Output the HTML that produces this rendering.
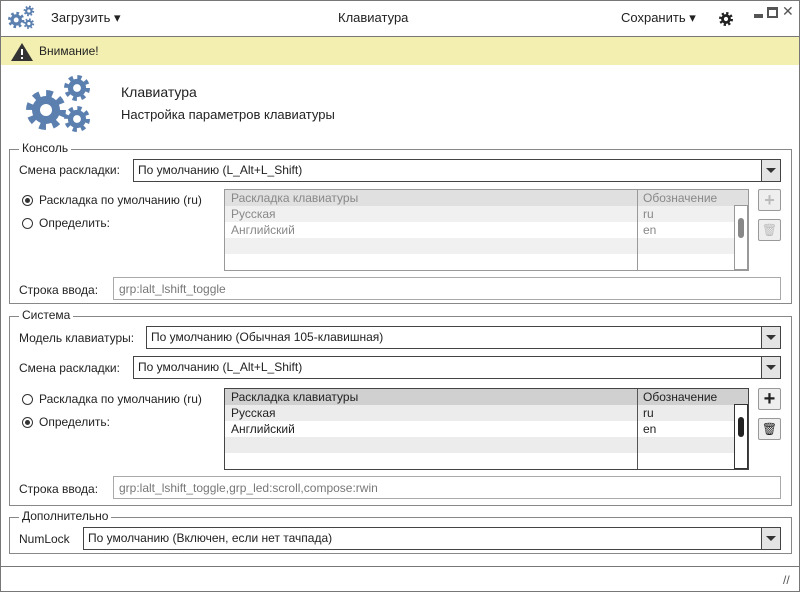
<!DOCTYPE html>
<html><head><meta charset="utf-8"><style>
*{box-sizing:border-box;margin:0;padding:0}
body{width:800px;height:592px;position:relative;background:#fff;font-family:"Liberation Sans",sans-serif;font-size:12px;color:#222;overflow:hidden}
.a{position:absolute}
.win{left:0;top:0;width:800px;height:592px;border:1px solid #777}
.combo{position:absolute;height:23px;border:1px solid #444;background:#fff;padding:3px 4px;white-space:nowrap}
.combo .btn{position:absolute;right:0;top:0;width:19px;height:21px;border-left:1px solid #444;background:#e4e4e4}
.combo .btn:after{content:"";position:absolute;left:4px;top:8px;border-left:5px solid transparent;border-right:5px solid transparent;border-top:5px solid #333}
.inp{position:absolute;height:23px;border:1px solid #aaa;padding:4px 5px;color:#777;white-space:nowrap}
fieldset{position:absolute;border:1px solid #888;border-radius:0}
.leg{position:absolute;background:#fff;padding:0 3px}
.radio{position:absolute;width:11px;height:11px;border:1px solid #333;border-radius:50%}
.radio.on:after{content:"";position:absolute;left:2px;top:2px;width:5px;height:5px;border-radius:50%;background:#333}
.tbl{position:absolute;border:1px solid #999;overflow:hidden}
.row{height:16px;padding-left:6px;line-height:16px;position:relative}
.row span{position:absolute;left:418px}
.sb{position:absolute;right:0;top:15px;width:14px;bottom:0;border:1px solid #333;background:#fff}
.sbtn{position:absolute;width:23px;height:22px;border:1px solid #999;border-radius:2px;background:#eee}
</style></head><body>
<div class="a win"></div>
<svg width="0" height="0" style="position:absolute"><defs>
<g id="gear"><circle r="7" fill="currentColor"/><circle r="8.2" fill="none" stroke="currentColor" stroke-width="3.6" stroke-dasharray="3.2 3.24"/><circle r="3" fill="#fff"/></g>
</defs></svg>
<!-- title -->
<svg class="a" style="left:8px;top:5px;color:#5b80b0" width="27" height="25" viewBox="0 0 66 60"><use href="#gear" transform="translate(20,36) scale(2)"/><use href="#gear" transform="translate(51,14) scale(1.3)"/><use href="#gear" transform="translate(51,45) scale(1.3)"/></svg>
<div class="a" style="left:51px;top:10px;font-size:13px">Загрузить ▾</div>
<div class="a" style="left:338px;top:10px;font-size:13px">Клавиатура</div>
<div class="a" style="left:621px;top:10px;font-size:13px">Сохранить ▾</div>
<svg class="a" style="left:719px;top:12px;color:#222" width="14" height="14" viewBox="-10 -10 20 20"><use href="#gear"/></svg>
<div class="a" style="left:754px;top:14px;width:9px;height:4px;background:#555"></div>
<div class="a" style="left:767px;top:7px;width:11px;height:11px;border:2px solid #555;border-top-width:3px"></div>
<div class="a" style="left:782px;top:3px;font-size:14px;color:#555">✕</div>
<div class="a" style="left:1px;top:36px;width:798px;height:1px;background:#777"></div>
<div class="a" style="left:1px;top:37px;width:798px;height:28px;background:#f2efb0"></div>
<svg class="a" style="left:10px;top:42px" width="24" height="20"><path d="M12 1 L23 19 L1 19Z" fill="#333"/><rect x="11" y="7" width="2" height="6" fill="#fff"/><rect x="11" y="15" width="2" height="2" fill="#fff"/></svg>
<div class="a" style="left:39px;top:44px">Внимание!</div>
<!-- header -->
<svg class="a" style="left:26px;top:74px;color:#5b80b0" width="66" height="60" viewBox="0 0 66 60"><use href="#gear" transform="translate(20,36) scale(2)"/><use href="#gear" transform="translate(51,14) scale(1.3)"/><use href="#gear" transform="translate(51,45) scale(1.3)"/></svg>
<div class="a" style="left:121px;top:84px;font-size:14px">Клавиатура</div>
<div class="a" style="left:121px;top:107px;font-size:13px">Настройка параметров клавиатуры</div>
<!-- console -->
<fieldset style="left:9px;top:149px;width:783px;height:155px"></fieldset>
<div class="leg" style="left:19px;top:141px">Консоль</div>
<div class="a" style="left:19px;top:163px">Смена раскладки:</div>
<div class="combo" style="left:133px;top:159px;width:648px">По умолчанию (L_Alt+L_Shift)<div class="btn"></div></div>
<div class="radio on" style="left:22px;top:195px"></div><div class="a" style="left:39px;top:193px">Раскладка по умолчанию (ru)</div>
<div class="radio" style="left:22px;top:218px"></div><div class="a" style="left:39px;top:216px">Определить:</div>
<div class="tbl" style="left:224px;top:189px;width:525px;height:82px;color:#888">
<div class="row" style="background:#e0e0e0">Раскладка клавиатуры<span>Обозначение</span></div>
<div class="row" style="background:#f0f0f0">Русская<span>ru</span></div>
<div class="row">Английский<span>en</span></div>
<div class="row" style="background:#f0f0f0"></div>
<div class="a" style="left:412px;top:0;bottom:0;width:1px;background:#999"></div>
<div class="sb" style="border-color:#999"><div class="a" style="left:3px;top:12px;width:6px;height:20px;border-radius:3px;background:#888"></div></div>
</div>
<div class="sbtn" style="left:758px;top:189px;color:#bbb;font-size:18px;text-align:center;line-height:20px;font-weight:bold">+</div>
<div class="sbtn" style="left:758px;top:219px;color:#bbb;text-align:center;line-height:20px">🗑</div>
<div class="a" style="left:19px;top:283px">Строка ввода:</div>
<div class="inp" style="left:113px;top:277px;width:668px">grp:lalt_lshift_toggle</div>
<!-- system -->
<fieldset style="left:9px;top:316px;width:783px;height:190px"></fieldset>
<div class="leg" style="left:19px;top:308px">Система</div>
<div class="a" style="left:19px;top:331px">Модель клавиатуры:</div>
<div class="combo" style="left:146px;top:326px;width:635px">По умолчанию (Обычная 105-клавишная)<div class="btn"></div></div>
<div class="a" style="left:19px;top:361px">Смена раскладки:</div>
<div class="combo" style="left:133px;top:356px;width:648px">По умолчанию (L_Alt+L_Shift)<div class="btn"></div></div>
<div class="radio" style="left:22px;top:394px"></div><div class="a" style="left:39px;top:392px">Раскладка по умолчанию (ru)</div>
<div class="radio on" style="left:22px;top:417px"></div><div class="a" style="left:39px;top:415px">Определить:</div>
<div class="tbl" style="left:224px;top:388px;width:525px;height:82px;border-color:#444">
<div class="row" style="background:#d0d0d0">Раскладка клавиатуры<span>Обозначение</span></div>
<div class="row" style="background:#ececec">Русская<span>ru</span></div>
<div class="row">Английский<span>en</span></div>
<div class="row" style="background:#ececec"></div>
<div class="a" style="left:412px;top:0;bottom:0;width:1px;background:#555"></div>
<div class="sb"><div class="a" style="left:3px;top:12px;width:6px;height:20px;border-radius:3px;background:#222"></div></div>
</div>
<div class="sbtn" style="left:758px;top:388px;font-size:20px;text-align:center;line-height:20px;font-weight:bold">+</div>
<div class="sbtn" style="left:758px;top:418px;text-align:center;line-height:20px">🗑</div>
<div class="a" style="left:19px;top:482px">Строка ввода:</div>
<div class="inp" style="left:113px;top:476px;width:668px">grp:lalt_lshift_toggle,grp_led:scroll,compose:rwin</div>
<!-- extra -->
<fieldset style="left:9px;top:517px;width:783px;height:37px"></fieldset>
<div class="leg" style="left:19px;top:509px">Дополнительно</div>
<div class="a" style="left:19px;top:532px">NumLock</div>
<div class="combo" style="left:83px;top:527px;width:698px">По умолчанию (Включен, если нет тачпада)<div class="btn"></div></div>
<div class="a" style="left:1px;top:566px;width:798px;height:1px;background:#777"></div>
<div class="a" style="left:783px;top:573px;color:#555;font-size:12px">//</div>
</body></html>
